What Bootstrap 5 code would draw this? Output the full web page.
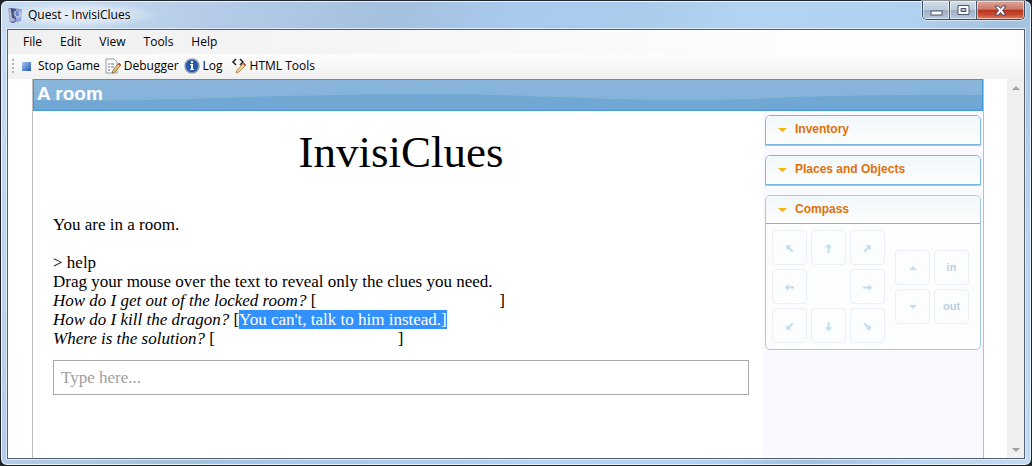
<!DOCTYPE html>
<html lang="en">
<head>
<meta charset="utf-8">
<meta name="viewport" content="width=device-width, initial-scale=1">
<title>Quest - InvisiClues</title>
<link href="https://cdn.jsdelivr.net/npm/bootstrap@5.3.0/dist/css/bootstrap.min.css" rel="stylesheet">
<style>
  html, body { height: 100%; }
  body { background: #20242c; font-family: "Open Sans", "Noto Sans", sans-serif; font-size: 12px; line-height: 16px; color: #000; overflow: hidden; }
  button { line-height: 16px; }
  .app-frame { min-height: 100%; padding: 0 6px 6px; border: 1px solid #20242c; border-radius: 7px; box-shadow: inset 0 0 0 1px #eaf4fd;
    background: linear-gradient(115deg, #c9dcf0 0, #bcd2ea 12%, #b3cbe7 18%, #a4c0de 32%, #a9caee 42%, #aacbea 52%, #b3d3f2 60%, #b1d1f1 74%, #a3c0df 82%, #b9d3f1 90%, #c4daf4 100%); }
  .title-row { height: 28px; }
  .title-label { padding: 0 5px; position: relative; z-index: 0; }
  .title-label::before { content: ""; position: absolute; z-index: -1; inset: -5px -24px; background: radial-gradient(closest-side, rgba(255,255,255,.65), rgba(255,255,255,.4) 60%, rgba(255,255,255,0)); }
  .win-buttons { height: 19px; border: 1px solid #3d4a5e; border-top: 0; border-radius: 0 0 5px 5px; overflow: hidden; box-shadow: 0 0 0 1px rgba(255,255,255,.5); }
  .win-buttons button { width: 27px; padding: 0; border: 0; border-right: 1px solid #4b586b; box-shadow: inset 0 0 0 1px rgba(255,255,255,.55); background: linear-gradient(#d3deea 0, #bccad9 48%, #9aacc0 50%, #b4cbe0 100%); }
  .win-buttons .win-close { width: 47px; border-right: 0; background: linear-gradient(#dda79b 0, #cf7767 46%, #b23420 50%, #c9472e 75%, #dd8166 100%); }
  .client { border: 1px solid #53606d; background: #fff; box-shadow: 0 0 0 1px rgba(230,243,255,.8); min-width: 0; min-height: 0; }
  .menu-row { height: 24px; background: linear-gradient(90deg, #f0f0f0, #fdfdfd 80%); padding-left: 8px; }
  .tool-row { height: 25px; background: linear-gradient(#fdfdfd, #f0f0f0); padding: 0 0 2px 4px; }
  .bare { border: 0; background: none; color: #000; padding: 0; white-space: nowrap; }
  .menu-row .bare { padding: 0 7px; margin-right: 4px; }
  .tool-row .bare { display: flex; align-items: center; gap: 3px; margin-left: 5px; }
  .grip { width: 2px; height: 14px; background: repeating-linear-gradient(#b4b4b4 0 2px, transparent 2px 4px); }
  .game { border: solid #bdbdc0; border-width: 0 1px; margin: 0 23px 0 24px; }
  .location { height: 32px; border: 1px solid #4297d7; background: linear-gradient(#8ab6db, #82b1d7); font: bold 19px/28px "Liberation Sans", Arial, sans-serif; color: #fff; overflow: hidden; }
  .location h1 { font: inherit; padding-left: 3px; margin: 0; }
  .location svg { inset: 0; }
  .story { padding: 0 14px 0 20px; font: 17px/19px "Liberation Serif", Georgia, serif; }
  .story h2 { font: 45px/52px "Liberation Serif", Georgia, serif; padding-top: 15px; margin-bottom: 37px; }
  .story p { margin-bottom: 19px; }
  .hidden-clue { display: inline-block; width: 183px; height: 19px; vertical-align: top; }
  .picked { background: #3390ff; color: #fff; }
  .command { border: 1px solid #a9a9a9; border-radius: 0; height: 35px; padding: 0 7px; font: 17px/20px "Liberation Serif", Georgia, serif; margin-top: 12px; width: 100%; }
  .command::placeholder { color: #a0a0a0; }
  .side { width: 220px; background: #f9f9ff; padding: 4px 2px; font-family: "Liberation Sans", Arial, sans-serif; }
  .side h3 { margin: 0; }
  .pane { border: 1px solid #79b7e7; border-radius: 5px 5px 0 0; overflow: hidden; background: #fcfdfd; box-shadow: 0 1px 0 #a6c9e2; margin-bottom: 10px; }
  .pane-head { width: 100%; height: 28px; border: 0; background: linear-gradient(#f1f7f9, #fcfdfd); color: #e17009; font-weight: bold; font-size: 12px; text-align: left; padding: 0 0 2px 12px; display: flex; align-items: center; gap: 8px; }
  .pane-head svg { margin-top: 2px; }
  .pane-open { border-radius: 5px; box-shadow: none; border-color: #a6c9e2; }
  .pane-open .pane-head { border-bottom: 1px solid #79b7e7; }
  .compass { padding: 6px; gap: 0 10px; }
  .dirs { display: grid; grid-template-columns: repeat(3, 35px); gap: 4px; }
  .dirs-two { grid-template-columns: repeat(2, 35px); }
  .dirs button { height: 35px; border: 1px solid #e9f0f8; border-radius: 4px; background: #fcfdff; color: #b9cddc; font-weight: bold; font-size: 11px; padding: 0; line-height: 12px; }
  .scroller { width: 17px; background: #f0f0f0; padding: 7px 0 6px; }
</style>
</head>
<body>
<div class="app-frame d-flex flex-column">
  <header class="title-row d-flex justify-content-between">
    <div class="d-flex align-items-center">
      <svg width="16" height="16" viewBox="0 0 16 16"><defs><linearGradient id="book" x2="1" y2="1"><stop stop-color="#2c3f83"/><stop offset="1" stop-color="#3d5cad"/></linearGradient></defs><path d="M2 1L13 2l1 11-8 3-3-1z" fill="url(#book)"/><path d="M9 2l6 0-1 12-5 1z" fill="#7f92d2"/><path d="M1 1l4 1 1 9 3 3-5 1-2-2z" fill="#a8acc4"/><path d="M4 2l2 0 1 9-2 0z" fill="#26336a"/><path d="M8 4v4q1 3 4 2 2-3 0-5" fill="#4864b4" stroke="#d9e2f6"/></svg>
      <span class="title-label">Quest - InvisiClues</span>
    </div>
    <div class="win-buttons d-flex">
      <button type="button" aria-label="Minimize"><svg width="13" height="13" viewBox="0 0 13 13"><rect x="1" y="7" width="11" height="4" fill="#fff" stroke="#4c5468"/></svg></button>
      <button type="button" aria-label="Maximize"><svg width="13" height="13" viewBox="0 0 13 13"><path d="M1 1.500h11v9H1zM4 4.500h5v3H4z" fill="#fff" fill-rule="evenodd" stroke="#4c5468"/></svg></button>
      <button type="button" class="win-close" aria-label="Close"><svg width="13" height="13" viewBox="0 0 13 13"><path d="M1 2h3.500l2 2.500 2-2.500H12L8.500 6.500 12 11H8.500l-2-2.500-2 2.500H1l3.500-4.500z" fill="#fff" stroke="#4c4458"/></svg></button>
    </div>
  </header>
  <div class="client flex-grow-1 d-flex flex-column">
    <nav class="menu-row d-flex align-items-center" aria-label="Menu">
      <button type="button" class="bare">File</button><button type="button" class="bare">Edit</button><button type="button" class="bare">View</button><button type="button" class="bare">Tools</button><button type="button" class="bare">Help</button>
    </nav>
    <div class="tool-row d-flex align-items-center">
      <span class="grip"></span>
      <button type="button" class="bare"><svg width="16" height="16"><defs><linearGradient id="sq" x2="1" y2="1"><stop stop-color="#a8c8f4"/><stop offset="1" stop-color="#1f55b8"/></linearGradient></defs><rect x="3" y="4" width="9" height="9" fill="url(#sq)"/></svg>Stop Game</button>
      <button type="button" class="bare"><svg width="16" height="16" viewBox="0 0 16 16"><path d="M1 1h8l3 3v11H1z" fill="#fafafa" stroke="#999"/><path d="M3 6h2m1 0h3M3 9h2m1 0h3M3 12h2" stroke="#667ba0"/><path d="M7 15l1-3 6-7 2 2-6 7z" fill="#edc06b" stroke="#80602f" stroke-width=".7"/><path d="M13 6l1-1 2 2-1 1z" fill="#b8433a"/></svg>Debugger</button>
      <button type="button" class="bare"><svg width="16" height="16" viewBox="0 0 16 16"><circle cx="8" cy="8" r="7" fill="#2459ad" stroke="#8f9caf" stroke-width="1.500"/><path d="M7 3h2v2H7zM6 6h3v5h1v1H6v-1h1V7H6z" fill="#fff"/></svg>Log</button>
      <button type="button" class="bare ms-2"><svg width="16" height="16" viewBox="0 0 16 16"><path d="M5 1L2 4l3 3M9 1l3 3-3 3" fill="none" stroke="#222" stroke-width="1.500"/><path d="M5 15l1-3 7-7 2 2-7 7z" fill="#f0d08b" stroke="#9b763d" stroke-width=".7"/><path d="M12 6l1-1 2 2-1 1z" fill="#b8433a"/></svg>HTML Tools</button>
    </div>
    <div class="d-flex flex-grow-1">
      <main class="game d-flex flex-column flex-grow-1">
        <div class="location position-relative">
          <svg class="position-absolute w-100 h-100" viewBox="0 0 950 30" preserveAspectRatio="none"><path d="M0 20Q60 22 190 18T390 14Q450 14 550 18T720 19Q830 14 950 15V30H0z" fill="#6ca5d2" opacity=".85"/></svg>
          <h1 class="position-relative">A room</h1>
        </div>
        <div class="d-flex flex-grow-1">
          <section class="story flex-grow-1">
            <h2 class="text-center">InvisiClues</h2>
            <p>You are in a room.</p>
            <div>&gt; help</div>
            <div>Drag your mouse over the text to reveal only the clues you need.</div>
            <div><i>How do I get out of the locked room?</i> [<span class="hidden-clue"></span>]</div>
            <div><i>How do I kill the dragon?</i> [<span class="picked">You can't, talk to him instead.]</span></div>
            <div><i>Where is the solution?</i> [<span class="hidden-clue"></span>]</div>
            <input class="command" type="text" placeholder="Type here..." aria-label="Command">
          </section>
          <aside class="side flex-shrink-0">
            <div class="pane"><h3><button type="button" class="pane-head"><svg width="9" height="4"><path d="M0 0h9L4.500 4z" fill="#f5b400"/></svg>Inventory</button></h3></div>
            <div class="pane"><h3><button type="button" class="pane-head"><svg width="9" height="4"><path d="M0 0h9L4.500 4z" fill="#f5b400"/></svg>Places and Objects</button></h3></div>
            <div class="pane pane-open"><h3><button type="button" class="pane-head"><svg width="9" height="4"><path d="M0 0h9L4.500 4z" fill="#f5b400"/></svg>Compass</button></h3>
              <div class="compass d-flex align-items-center">
                <div class="dirs">
                  <button type="button" aria-label="Northwest"><svg width="9" height="9" overflow="visible"><use href="#arrow" transform="rotate(-45 4.500 4.500)"/></svg></button>
                  <button type="button" aria-label="North"><svg width="9" height="9"><use href="#arrow"/></svg></button>
                  <button type="button" aria-label="Northeast"><svg width="9" height="9" overflow="visible"><use href="#arrow" transform="rotate(45 4.500 4.500)"/></svg></button>
                  <button type="button" aria-label="West"><svg width="9" height="9"><use href="#arrow" transform="rotate(-90 4.500 4.500)"/></svg></button>
                  <span></span>
                  <button type="button" aria-label="East"><svg width="9" height="9"><use href="#arrow" transform="rotate(90 4.500 4.500)"/></svg></button>
                  <button type="button" aria-label="Southwest"><svg width="9" height="9" overflow="visible"><use href="#arrow" transform="rotate(-135 4.500 4.500)"/></svg></button>
                  <button type="button" aria-label="South"><svg width="9" height="9"><use href="#arrow" transform="rotate(180 4.500 4.500)"/></svg></button>
                  <button type="button" aria-label="Southeast"><svg width="9" height="9" overflow="visible"><use href="#arrow" transform="rotate(135 4.500 4.500)"/></svg></button>
                </div>
                <div class="dirs dirs-two">
                  <button type="button" aria-label="Up"><svg width="8" height="4"><path d="M0 4h8L4 0z" fill="#c6dff0"/></svg></button>
                  <button type="button">in</button>
                  <button type="button" aria-label="Down"><svg width="8" height="4"><path d="M0 0h8L4 4z" fill="#c6dff0"/></svg></button>
                  <button type="button">out</button>
                </div>
              </div>
            </div>
          </aside>
        </div>
      </main>
      <div class="scroller d-flex flex-column justify-content-between align-items-center">
        <svg width="8" height="4"><path d="M0 4h8L4 0z" fill="#a0a0a0"/></svg>
        <svg width="8" height="4"><path d="M0 0h8L4 4z" fill="#a0a0a0"/></svg>
      </div>
    </div>
  </div>
</div>
<svg width="0" height="0" class="position-absolute"><defs><path id="arrow" d="M4.500 0L8 3.500H5.500V9h-2V3.500H1z" fill="#c0dcee"/></defs></svg>
<script src="https://cdn.jsdelivr.net/npm/bootstrap@5.3.0/dist/js/bootstrap.bundle.min.js"></script>
</body>
</html>
